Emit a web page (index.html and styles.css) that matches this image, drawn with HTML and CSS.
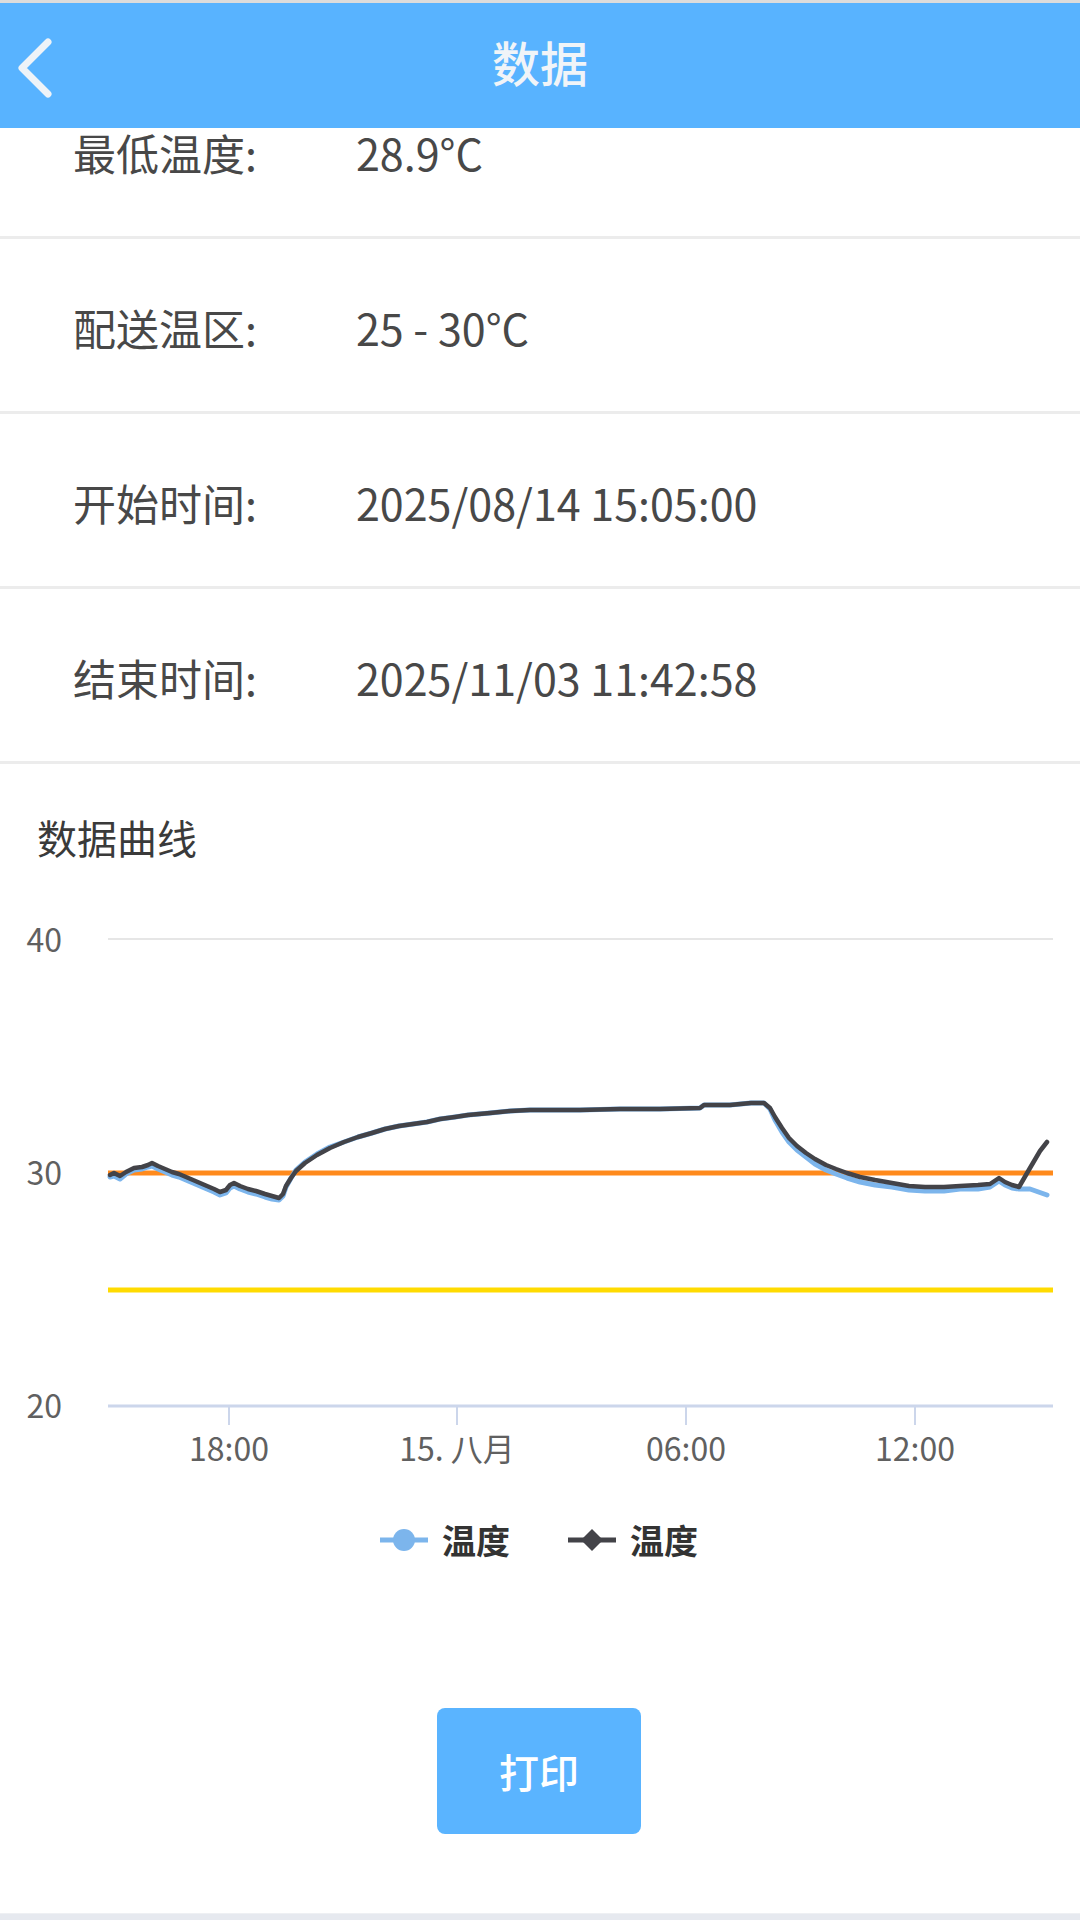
FILE: index.html
```html
<!DOCTYPE html>
<html lang="zh-CN">
<head>
<meta charset="utf-8">
<title>数据</title>
<link rel="stylesheet" href="styles.css">
</head>
<body>
<div class="app">
  <div class="statusline"></div>
  <header class="topbar">
    <svg class="back" viewBox="0 0 40 60" width="40" height="60" aria-hidden="true">
      <polyline points="32,4 6,30 32,56" fill="none" stroke="#eef3f8" stroke-width="7" stroke-linecap="round" stroke-linejoin="round"/>
    </svg>
    <h1 class="title">数据</h1>
  </header>

  <main class="content">
    <ul class="info-list">
      <li class="row"><span class="label">最低温度:</span><span class="value">28.9°C</span></li>
      <li class="row"><span class="label">配送温区:</span><span class="value">25 - 30°C</span></li>
      <li class="row"><span class="label">开始时间:</span><span class="value">2025/08/14 15:05:00</span></li>
      <li class="row"><span class="label">结束时间:</span><span class="value">2025/11/03 11:42:58</span></li>
    </ul>

    <section class="chart-card">
      <h2 class="chart-title">数据曲线</h2>
      <svg class="chart" viewBox="0 0 1080 600" width="1080" height="600">
        <g transform="translate(0,-880)">
          <line x1="108" y1="938" x2="1053" y2="938" stroke="#e6e6e6" stroke-width="2"/>
          <line x1="108" y1="1171" x2="1053" y2="1171" stroke="#e6e6e6" stroke-width="2"/>
          <line x1="108" y1="1405" x2="1053" y2="1405" stroke="#ccd6eb" stroke-width="3"/>
          <g stroke="#ccd6eb" stroke-width="2">
            <line x1="229" y1="1405" x2="229" y2="1424"/>
            <line x1="457" y1="1405" x2="457" y2="1424"/>
            <line x1="686" y1="1405" x2="686" y2="1424"/>
            <line x1="915" y1="1405" x2="915" y2="1424"/>
          </g>
          <g class="axis-text" text-anchor="end">
            <text x="62" y="951">40</text>
            <text x="62" y="1184">30</text>
            <text x="62" y="1417">20</text>
          </g>
          <g class="axis-text" text-anchor="middle">
            <text x="229" y="1460">18:00</text>
            <text x="457" y="1460">15. 八月</text>
            <text x="686" y="1460">06:00</text>
            <text x="915" y="1460">12:00</text>
          </g>
          <line x1="108" y1="1172" x2="1053" y2="1172" stroke="#ff8a1c" stroke-width="5"/>
          <line x1="108" y1="1289" x2="1053" y2="1289" stroke="#ffdb00" stroke-width="5"/>
          <polyline fill="none" stroke="#7cb5ec" stroke-width="5" stroke-linejoin="round" stroke-linecap="round"
            points="110,1176 114,1175 120,1178 126,1173 134,1169 142,1168 148,1166 152,1165 158,1168 165,1171 172,1174 179,1176 186,1179 193,1182 200,1185 207,1188 214,1191 220,1194 226,1192 230,1187 234,1185 240,1188 248,1191 256,1193 265,1196 272,1198 279,1199 283,1195 286,1186 291,1177 296,1169 305,1161 317,1153 330,1146 344,1141 358,1136 372,1132 385,1128 399,1125 413,1123 427,1121 440,1118 455,1116 468,1114 490,1112 510,1110 530,1109 551,1109 580,1109 620,1108 660,1108 700,1107 704,1104 730,1104 751,1102 764,1102 770,1108 775,1119 782,1131 789,1141 797,1149 806,1156 815,1163 826,1169 836,1173 847,1177 860,1181 875,1184 892,1186 909,1189 925,1190 944,1190 960,1188 978,1188 990,1186 999,1180 1005,1184 1012,1187 1019,1188 1030,1188 1047,1194"/>
          <polyline fill="none" stroke="#434348" stroke-width="4.5" stroke-linejoin="round" stroke-linecap="round"
            points="110,1174 114,1172 120,1175 126,1171 134,1167 142,1166 148,1164 152,1162 158,1165 165,1168 172,1171 179,1173 186,1176 193,1179 200,1182 207,1185 214,1188 220,1191 226,1189 230,1184 234,1182 240,1185 248,1188 256,1190 265,1193 272,1195 279,1197 283,1193 286,1185 291,1177 296,1170 305,1162 317,1154 330,1147 344,1141 358,1136 372,1132 385,1128 399,1125 413,1123 427,1121 440,1118 455,1116 468,1114 490,1112 510,1110 530,1109 551,1109 580,1109 620,1108 660,1108 700,1107 704,1104 730,1104 751,1102 764,1102 770,1107 775,1116 782,1127 789,1137 797,1145 806,1152 815,1158 826,1164 836,1168 847,1172 860,1176 875,1179 892,1182 909,1185 925,1186 944,1186 960,1185 978,1184 990,1183 999,1177 1005,1181 1012,1184 1019,1186 1030,1167 1040,1150 1047,1141"/>
        </g>
      </svg>
      <div class="legend">
        <div class="legend-item">
          <svg class="legend-symbol" viewBox="0 0 48 24" width="48" height="24">
            <line x1="0" y1="12" x2="48" y2="12" stroke="#7cb5ec" stroke-width="5"/>
            <circle cx="24" cy="12" r="11" fill="#7cb5ec"/>
          </svg>
          <span class="legend-text">温度</span>
        </div>
        <div class="legend-item">
          <svg class="legend-symbol" viewBox="0 0 48 24" width="48" height="24">
            <line x1="0" y1="12" x2="48" y2="12" stroke="#434348" stroke-width="5"/>
            <polygon points="24,1 35,12 24,23 13,12" fill="#434348"/>
          </svg>
          <span class="legend-text">温度</span>
        </div>
      </div>
    </section>

    <div class="actions">
      <button class="print-btn" type="button">打印</button>
    </div>
  </main>
  <div class="bottom-bar"></div>
</div>
</body>
</html>
```

FILE: styles.css
```css
* {
  box-sizing: border-box;
}

html, body {
  margin: 0;
  padding: 0;
  background: #ffffff;
}

body {
  font-family: "Noto Sans CJK SC", "Noto Sans", sans-serif;
  color: #444;
}

.app {
  position: relative;
  width: 1080px;
  min-height: 1920px;
  display: flex;
  flex-direction: column;
  overflow: hidden;
}

.statusline {
  height: 3px;
  background: #dcdcdc;
}

.topbar {
  position: absolute;
  top: 3px;
  left: 0;
  right: 0;
  height: 125px;
  background: #58b3ff;
  display: flex;
  align-items: center;
  justify-content: center;
  z-index: 10;
}

.back {
  position: absolute;
  left: 16px;
  top: 35px;
}

.title {
  margin: 0;
  font-size: 48px;
  font-weight: 500;
  color: #f0f4f8;
  line-height: 1;
  margin-top: -10px;
}

.content {
  display: flex;
  flex-direction: column;
  flex: 1;
}

.info-list {
  list-style: none;
  margin: 61px 0 0 0;
  padding: 0;
}

.row {
  height: 175px;
  border-bottom: 3px solid #ececec;
  display: flex;
  align-items: center;
  padding-left: 73px;
  padding-top: 4px;
  font-size: 43px;
  color: #484848;
}

.label {
  width: 283px;
  flex-shrink: 0;
}

.value {
  color: #484848;
}

.chart-card {
  display: flex;
  flex-direction: column;
}

.chart-title {
  margin: 49px 0 0 37px;
  font-size: 40px;
  font-weight: 400;
  line-height: 48px;
  color: #3a3a3a;
}

.chart {
  display: block;
  margin-top: 20px;
}

.axis-text {
  font-family: "Noto Sans CJK SC", "Noto Sans", sans-serif;
  font-size: 32px;
  fill: #606060;
}

.legend {
  display: flex;
  justify-content: center;
  align-items: center;
  gap: 58px;
  margin-top: 39px;
  height: 40px;
  padding-right: 2px;
}

.legend-item {
  display: flex;
  align-items: center;
  gap: 14px;
}

.legend-symbol {
  display: block;
}

.legend-text {
  font-size: 34px;
  font-weight: 700;
  color: #333;
  line-height: 40px;
}

.actions {
  display: flex;
  justify-content: center;
  margin-top: 148px;
}

.print-btn {
  width: 204px;
  height: 126px;
  margin-right: 2px;
  border: none;
  border-radius: 8px;
  background: #5ab4ff;
  color: #ffffff;
  font-family: "Noto Sans CJK SC", "Noto Sans", sans-serif;
  font-size: 40px;
  font-weight: 500;
  padding: 0;
}

.bottom-bar {
  margin-top: auto;
  height: 7px;
  background: #e6e9ef;
  border-top: 1px solid #eef0f3;
}
```
